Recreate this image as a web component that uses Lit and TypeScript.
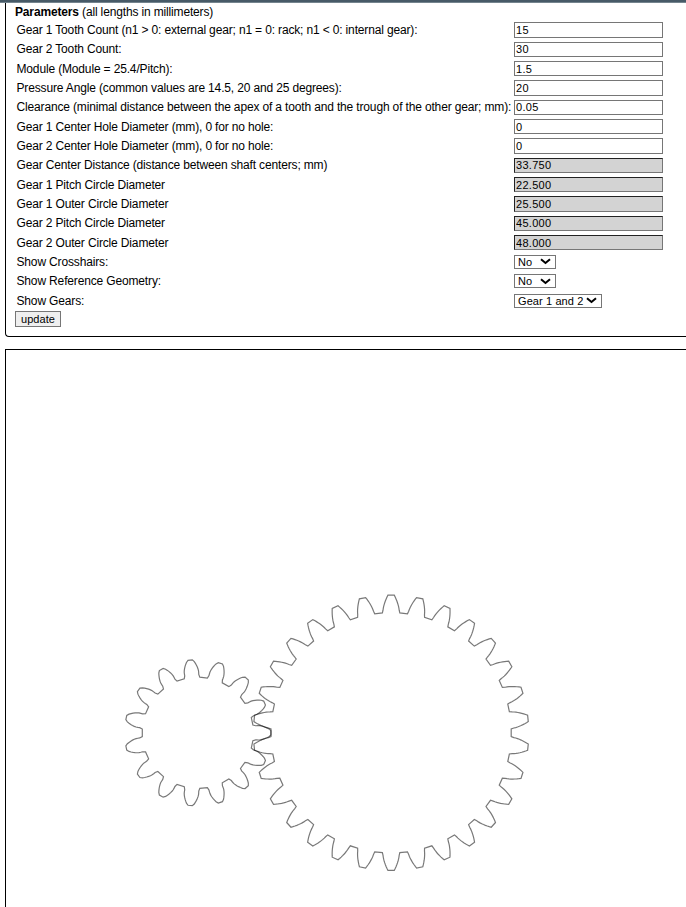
import { LitElement, html, css, svg } from "lit";
import { customElement, property } from "lit/decorators.js";

const MODULE = 1.5;
const PRESSURE = (20 * Math.PI) / 180;
const CLEARANCE = 0.05;
const SCALE = 5.735;

const inv = (a: number) => Math.tan(a) - a;

/* Outline of an involute gear cut by a rack; `phase` is the angle of one gap centre. */
function gearPath(n: number, cx: number, cy: number, phase: number): string {
  const pitch = (n * MODULE) / 2;
  const base = pitch * Math.cos(PRESSURE);
  const outer = pitch + MODULE;
  const root = pitch - MODULE - CLEARANCE;
  const w = (Math.PI * MODULE) / 4 - (MODULE + CLEARANCE) * Math.tan(PRESSURE);
  const gapAngle = (r: number) => {
    const y = Math.sqrt(Math.max(0, r * r - root * root));
    const fillet = Math.atan2(y, root) - (y - w) / pitch;
    const involute =
      r >= base ? Math.PI / (2 * n) - inv(PRESSURE) + inv(Math.acos(base / r)) : 0;
    return Math.max(r < pitch ? fillet : 0, involute);
  };
  const flank: [number, number][] = [[root, gapAngle(root + 0.05)]];
  const steps = 9;
  for (let i = 1; i <= steps; i++) {
    const r = root + 0.15 + ((outer - root - 0.15) * i) / steps;
    flank.push([r, gapAngle(r)]);
  }
  /* The tips of the small gear are trimmed slightly by the roots of the large one. */
  if (n < 20) flank[steps][1] += 0.009;

  const gap = [...flank].reverse().map(([r, a]) => [r, -a]).concat(flank);
  let d = "";
  for (let k = 0; k < n; k++) {
    const centre = phase + (2 * Math.PI * k) / n;
    for (const [r, a] of gap) {
      const x = cx + r * SCALE * Math.cos(centre + a);
      const y = cy + r * SCALE * Math.sin(centre + a);
      d += (d ? "L" : "M") + x.toFixed(2) + " " + y.toFixed(2);
    }
  }
  return d + "Z";
}

interface Field {
  label: string;
  kind: "input" | "result" | "select";
  value: string;
}

const FIELDS: Field[] = [
  { label: "Gear 1 Tooth Count (n1 > 0: external gear; n1 = 0: rack; n1 < 0: internal gear):", kind: "input", value: "15" },
  { label: "Gear 2 Tooth Count:", kind: "input", value: "30" },
  { label: "Module (Module = 25.4/Pitch):", kind: "input", value: "1.5" },
  { label: "Pressure Angle (common values are 14.5, 20 and 25 degrees):", kind: "input", value: "20" },
  { label: "Clearance (minimal distance between the apex of a tooth and the trough of the other gear; mm):", kind: "input", value: "0.05" },
  { label: "Gear 1 Center Hole Diameter (mm), 0 for no hole:", kind: "input", value: "0" },
  { label: "Gear 2 Center Hole Diameter (mm), 0 for no hole:", kind: "input", value: "0" },
  { label: "Gear Center Distance (distance between shaft centers; mm)", kind: "result", value: "33.750" },
  { label: "Gear 1 Pitch Circle Diameter", kind: "result", value: "22.500" },
  { label: "Gear 1 Outer Circle Diameter", kind: "result", value: "25.500" },
  { label: "Gear 2 Pitch Circle Diameter", kind: "result", value: "45.000" },
  { label: "Gear 2 Outer Circle Diameter", kind: "result", value: "48.000" },
  { label: "Show Crosshairs:", kind: "select", value: "No" },
  { label: "Show Reference Geometry:", kind: "select", value: "No" },
  { label: "Show Gears:", kind: "select", value: "Gear 1 and 2" },
];

@customElement("gear-select")
class GearSelect extends LitElement {
  @property() value = "";

  static styles = css`
    :host {
      display: inline-flex;
      align-items: center;
      box-sizing: border-box;
      height: 14px;
      border: 1px solid #767676;
      background: #fff;
      padding: 0 4px 0 3px;
      font: 11px/12px "Liberation Sans", Arial, sans-serif;
      letter-spacing: 0.1px;
      color: #000;
    }
    .text {
      min-width: 21.5px;
      padding-right: 3px;
      box-sizing: border-box;
    }
    .chevron {
      display: block;
      width: 11px;
      height: 7px;
    }
  `;

  render() {
    return html`<span class="text">${this.value}</span>
      <svg class="chevron" viewBox="0 0 11 7">
        <path d="M1 1.2 L5.5 5 L10 1.2" fill="none" stroke="#000" stroke-width="2" />
      </svg>`;
  }
}

@customElement("app-root")
class AppRoot extends LitElement {
  static styles = css`
    :host {
      display: flex;
      flex-direction: column;
      box-sizing: border-box;
      height: 907px;
      overflow: hidden;
      background: #fff;
      color: #000;
      font: 12px/14px "Liberation Sans", Arial, sans-serif;
    }
    .bar {
      flex: none;
      box-sizing: border-box;
      height: 3px;
      background: #475a67;
      border-bottom: 1px solid #74848e;
    }
    .panel {
      flex: none;
      box-sizing: border-box;
      height: 334px;
      margin-left: 5px;
      border: solid #000;
      border-width: 0 0 1px 1px;
      border-bottom-left-radius: 4px;
      padding: 2px 0 0 9px;
      letter-spacing: -0.152px;
    }
    .title {
      height: 15.34px;
      line-height: 15px;
    }
    .fields {
      display: grid;
      grid-template-columns: 497.5px 149px;
      grid-auto-rows: 19.34px;
      align-items: center;
      padding-left: 1.5px;
    }
    .label {
      white-space: nowrap;
    }
    .field {
      box-sizing: border-box;
      width: 149px;
      height: 15.34px;
      margin: 0;
      border: 1px solid #767676;
      border-radius: 0;
      outline: none;
      padding: 0 1px;
      background: #fff;
      color: #000;
      font: 11px/13px "Liberation Sans", Arial, sans-serif;
      letter-spacing: 0.3px;
    }
    .result {
      background: #d3d3d3;
      border-color: #222 #767676 #767676 #222;
    }
    .choice {
      display: flex;
    }
    .update {
      display: block;
      box-sizing: border-box;
      width: 46px;
      height: 16px;
      margin: 0.6px 0 0;
      padding: 0;
      border: 1px solid #767676;
      border-radius: 0;
      background: #efefef;
      color: #000;
      font: 11px/14px "Liberation Sans", Arial, sans-serif;
      letter-spacing: 0.05px;
    }
    .canvas {
      flex: 1;
      margin: 12px 0 0 5px;
      border: solid #000;
      border-width: 1px 0 0 1px;
    }
    .drawing {
      display: block;
      width: 680px;
      height: 557px;
    }
    .gear {
      fill: none;
      stroke: #000;
      stroke-width: 1.2;
      stroke-opacity: 0.53;
    }
  `;

  private control(f: Field) {
    if (f.kind === "select") {
      return html`<div class="choice"><gear-select .value=${f.value}></gear-select></div>`;
    }
    return html`<input
      class="field ${f.kind}"
      .value=${f.value}
      ?readonly=${f.kind === "result"}
    />`;
  }

  render() {
    return html`
      <div class="bar"></div>
      <section class="panel">
        <div class="title"><b>Parameters</b> (all lengths in millimeters)</div>
        <div class="fields">
          ${FIELDS.map((f) => html`<div class="label">${f.label}</div>${this.control(f)}`)}
        </div>
        <button class="update">update</button>
      </section>
      <section class="canvas">
        <svg class="drawing" viewBox="6 350 680 557">
          ${svg`
            <path class="gear" d=${gearPath(15, 197.8, 732.8, Math.PI)} />
            <path class="gear" d=${gearPath(30, 391.1, 732.8, 0)} />
          `}
        </svg>
      </section>
    `;
  }
}
